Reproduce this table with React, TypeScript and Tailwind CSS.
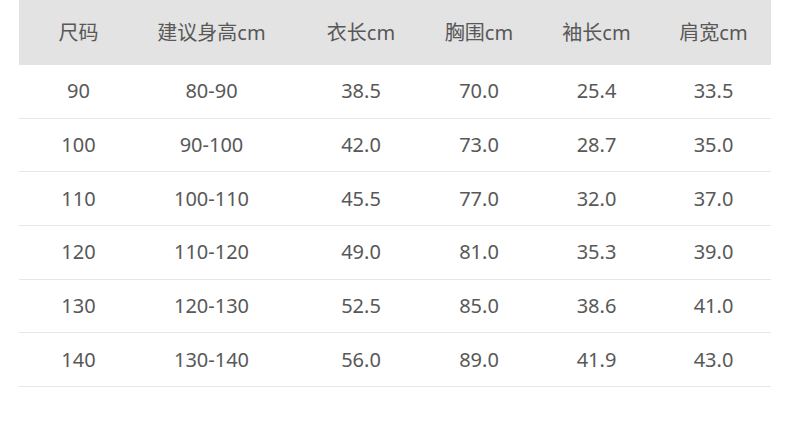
const headers = ['尺码', '建议身高cm', '衣长cm', '胸围cm', '袖长cm', '肩宽cm'];

const rows = [
  ['90', '80-90', '38.5', '70.0', '25.4', '33.5'],
  ['100', '90-100', '42.0', '73.0', '28.7', '35.0'],
  ['110', '100-110', '45.5', '77.0', '32.0', '37.0'],
  ['120', '110-120', '49.0', '81.0', '35.3', '39.0'],
  ['130', '120-130', '52.5', '85.0', '38.6', '41.0'],
  ['140', '130-140', '56.0', '89.0', '41.9', '43.0'],
];

// second column text sits a bit left of centre in the original
const cellPad = ['', 'pr-[17px]', '', '', '', ''];

export default function App() {
  return (
    <div
      className="h-[431px] w-[790px] bg-white px-[19px] text-[20px] text-[#585858]"
      style={{ fontFamily: '"Noto Sans", "Noto Sans CJK SC", sans-serif' }}
    >
      <div className="grid h-[65px] grid-cols-[119px_164px_118px_118px_117px_117px] items-center bg-[#e3e3e3]">
        {headers.map((h, i) => (
          <div key={h} className={`text-center ${cellPad[i]}`}>
            {h}
          </div>
        ))}
      </div>
      {rows.map((row) => (
        <div
          key={row[0]}
          className="grid h-[53.7px] grid-cols-[119px_164px_118px_118px_117px_117px] items-center border-b border-[#e6e6e6]"
        >
          {row.map((v, i) => (
            <div key={i} className={`text-center ${cellPad[i]}`}>
              {v}
            </div>
          ))}
        </div>
      ))}
    </div>
  );
}
